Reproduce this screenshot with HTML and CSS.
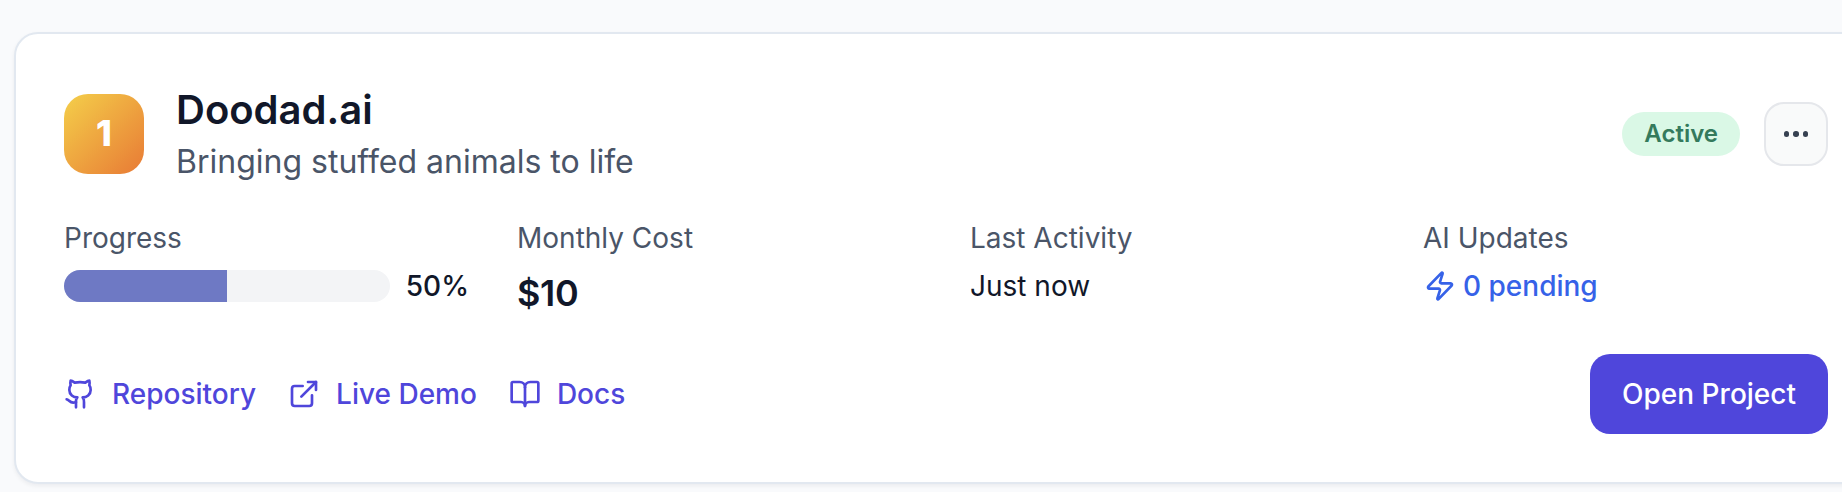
FILE: index.html
```html
<!DOCTYPE html>
<html lang="en">
<head>
<meta charset="utf-8">
<title>Doodad.ai</title>
<link rel="stylesheet" href="styles.css">
</head>
<body>
<article class="card">
  <header class="header">
    <div class="rank">1</div>
    <div class="heading">
      <h2 class="title">Doodad.ai</h2>
      <p class="tagline">Bringing stuffed animals to life</p>
    </div>
    <span class="badge">Active</span>
    <button class="menu" aria-label="More options"><i class="dot"></i><i class="dot"></i><i class="dot"></i></button>
  </header>
  <section class="stats">
    <div>
      <div class="label">Progress</div>
      <div class="value progress">
        <div class="track"><div class="fill" style="width:50%"></div></div>
        <span class="percent">50%</span>
      </div>
    </div>
    <div>
      <div class="label">Monthly Cost</div>
      <div class="value cost">$10</div>
    </div>
    <div>
      <div class="label">Last Activity</div>
      <div class="value">Just now</div>
    </div>
    <div>
      <div class="label">AI Updates</div>
      <div class="value updates">
        <svg class="icon" viewBox="0 0 24 24"><path d="M4 14a1 1 0 0 1-.78-1.63l9.9-10.2a.5.5 0 0 1 .86.46l-1.92 6.02A1 1 0 0 0 13 10h7a1 1 0 0 1 .78 1.63l-9.9 10.2a.5.5 0 0 1-.86-.46l1.92-6.02A1 1 0 0 0 11 14z"/></svg>
        <span>0 pending</span>
      </div>
    </div>
  </section>
  <footer class="footer">
    <nav class="links">
      <a class="link"><svg class="icon" viewBox="0 0 24 24"><path d="M15 22v-4a4.8 4.8 0 0 0-1-3.5c3 0 6-2 6-5.5.08-1.25-.27-2.48-1-3.5.28-1.15.28-2.35 0-3.5 0 0-1 0-3 1.5-2.64-.5-5.36-.5-8 0C6 2 5 2 5 2c-.3 1.15-.3 2.35 0 3.5A5.403 5.403 0 0 0 4 9c0 3.5 3 5.5 6 5.5-.39.49-.68 1.05-.85 1.65-.17.6-.22 1.23-.15 1.85v4"/><path d="M9 18c-4.51 2-5-2-7-2"/></svg>Repository</a>
      <a class="link"><svg class="icon" viewBox="0 0 24 24"><path d="M15 3h6v6"/><path d="M10 14 21 3"/><path d="M18 13v6a2 2 0 0 1-2 2H5a2 2 0 0 1-2-2V8a2 2 0 0 1 2-2h6"/></svg>Live Demo</a>
      <a class="link"><svg class="icon" viewBox="0 0 24 24"><path d="M12 7v14"/><path d="M3 18a1 1 0 0 1-1-1V4a1 1 0 0 1 1-1h5a4 4 0 0 1 4 4 4 4 0 0 1 4-4h5a1 1 0 0 1 1 1v13a1 1 0 0 1-1 1h-6a3 3 0 0 0-3 3 3 3 0 0 0-3-3z"/></svg>Docs</a>
    </nav>
    <button class="open">Open Project</button>
  </footer>
</article>
</body>
</html>
```
FILE: styles.css
```css
* { box-sizing: border-box; margin: 0; }
body {
  padding: 32px 0 0 14px;
  height: 492px;
  overflow: hidden;
  background: #f9fafc;
  color: #111729;
  font: 28px/40px Inter, sans-serif;
}
button { font: inherit; }
.card {
  width: 1864px;
  padding: 48px;
  background: #fff;
  border: 2px solid #e2e8f0;
  border-radius: 24px;
  box-shadow: 0 2px 4px rgba(15, 23, 42, .06);
}
.header { display: flex; align-items: center; }
.rank {
  width: 80px;
  height: 80px;
  border-radius: 24px;
  background: linear-gradient(135deg, #f4cf4a, #e87a35);
  color: #fff;
  font-size: 36px;
  font-weight: 800;
  line-height: 78px;
  text-align: center;
}
.heading { flex: 1; margin-left: 32px; }
.title { font-size: 40px; font-weight: 600; line-height: 56px; }
.tagline { color: #4a5568; font-size: 32px; line-height: 48px; }
.badge {
  padding: 6px 22px;
  border-radius: 22px;
  background: #daf8e6;
  color: #347a5c;
  font-size: 24px;
  font-weight: 600;
  line-height: 32px;
}
.menu {
  display: flex;
  align-items: center;
  justify-content: center;
  gap: 4px;
  width: 64px;
  height: 64px;
  margin-left: 24px;
  padding: 0;
  border: 2px solid #e5e7eb;
  border-radius: 20px;
  background: #f9fafa;
}
.dot { width: 5.5px; height: 5.5px; border-radius: 50%; background: #374151; }
.stats {
  display: grid;
  grid-template-columns: repeat(4, 1fr);
  column-gap: 48px;
  margin: 32px 0;
}
.label { color: #4a5568; }
.value { margin-top: 8px; }
.progress { display: flex; align-items: center; gap: 16px; }
.track {
  flex: 1;
  height: 32px;
  overflow: hidden;
  border-radius: 16px;
  background: #f3f4f6;
}
.fill { height: 100%; background: #6e79c4; }
.percent { font-weight: 500; }
.cost {
  padding-bottom: 2px;
  font-size: 36px;
  font-weight: 600;
  letter-spacing: -.3px;
  line-height: 54px;
}
.updates {
  display: flex;
  align-items: center;
  gap: 7px;
  padding-left: 1px;
  color: #3662e8;
  font-weight: 500;
}
.icon {
  flex: none;
  width: 32px;
  height: 32px;
  fill: none;
  stroke: currentColor;
  stroke-width: 2;
  stroke-linecap: round;
  stroke-linejoin: round;
}
.footer, .links, .link { display: flex; align-items: center; }
.footer { justify-content: space-between; }
.links { gap: 32px; }
.link { gap: 16px; color: #4f46db; font-weight: 500; }
.open {
  height: 80px;
  padding: 0 32px;
  border: 0;
  border-radius: 20px;
  background: #4f46db;
  color: #fff;
  font-weight: 500;
}
```
